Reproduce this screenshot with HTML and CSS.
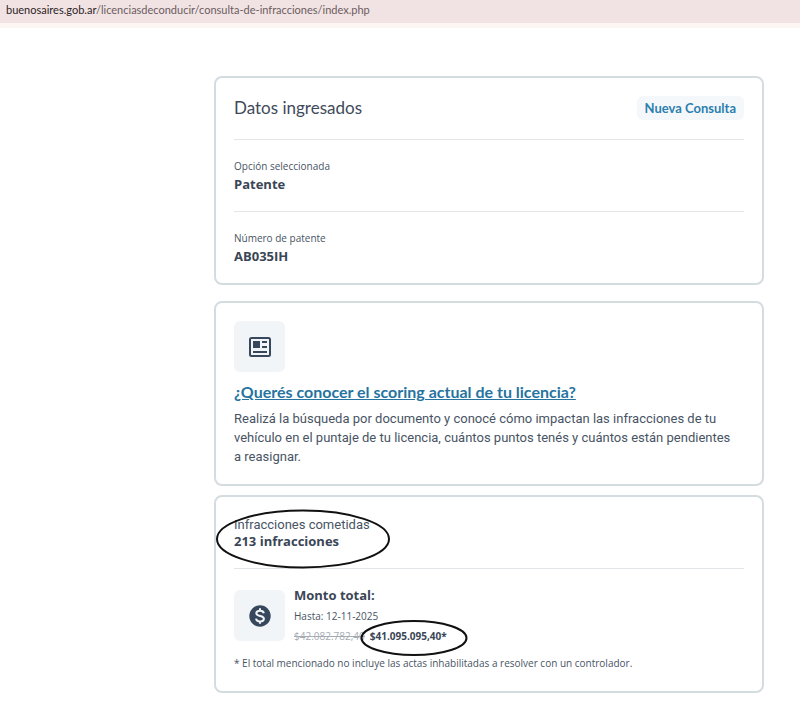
FILE: index.html
```html
<!DOCTYPE html>
<html lang="es">
<head>
<meta charset="utf-8">
<meta name="viewport" content="width=device-width, initial-scale=1">
<title>Consulta de infracciones</title>
<link rel="stylesheet" href="styles.css">
</head>
<body>
<header class="address-bar"><span class="host">buenosaires.gob.ar</span>/licenciasdeconducir/consulta-de-infracciones/index.php</header>
<main class="content">
  <section class="card">
    <div class="card-head">
      <h1 class="title">Datos ingresados</h1>
      <button class="new-query" type="button">Nueva Consulta</button>
    </div>
    <dl class="data">
      <div class="row"><dt>Opción seleccionada</dt><dd>Patente</dd></div>
      <div class="row"><dt>Número de patente</dt><dd>AB035IH</dd></div>
    </dl>
  </section>

  <section class="card scoring">
    <div class="tile">
      <svg class="icon" viewBox="0 0 22 20" aria-hidden="true">
        <rect x="1" y="1" width="20" height="18" rx="1.5" fill="none" stroke="currentColor" stroke-width="2"/>
        <path fill="currentColor" d="M4 4h7v7H4zM13 4h5v2h-5zM13 9h5v2h-5zM4 14h14v2H4z"/>
      </svg>
    </div>
    <h2 class="link-title"><a href="#scoring">¿Querés conocer el scoring actual de tu licencia?</a></h2>
    <p class="text">Realizá la búsqueda por documento y conocé cómo impactan las infracciones de tu vehículo en el puntaje de tu licencia, cuántos puntos tenés y cuántos están pendientes a&nbsp;reasignar.</p>
  </section>

  <section class="card summary">
    <div class="count">
      <div class="marked">
        <p class="count-label">Infracciones cometidas</p>
        <p><strong>213 infracciones</strong></p>
        <svg class="ring ring-count" viewBox="0 0 176 60" aria-hidden="true"><ellipse cx="88" cy="30" rx="86" ry="28.5"/></svg>
      </div>
    </div>
    <div class="total">
      <div class="tile">
        <svg class="icon" viewBox="0 0 22 22" aria-hidden="true">
          <circle cx="11" cy="11" r="10.7" fill="currentColor"/>
          <path class="dollar" d="M11 3.2v2.6M11 16.2v2.6M14.8 8.2C14.5 6.6 13 5.7 11 5.7c-2.2 0-3.7 1-3.7 2.6 0 1.7 1.6 2.2 3.8 2.7 2.3.5 3.8 1.1 3.8 2.8 0 1.6-1.6 2.6-3.8 2.6-2.3 0-3.8-1-4.1-2.8"/>
        </svg>
      </div>
      <div class="amounts">
        <h2 class="total-title">Monto total:</h2>
        <p class="until">Hasta: 12-11-2025</p>
        <p class="prices"><del>$42.082.782,40</del> <strong class="marked">$41.095.095,40*<svg class="ring ring-price" viewBox="0 0 108 36" aria-hidden="true"><ellipse cx="54" cy="18" rx="52.5" ry="17"/></svg></strong></p>
      </div>
    </div>
    <p class="note">* El total mencionado no incluye las actas inhabilitadas a resolver con un controlador.</p>
  </section>
</main>
</body>
</html>
```
FILE: styles.css
```css
* { box-sizing: border-box; }

body {
  margin: 0;
  background: #fff;
  color: #485464;
  font-family: "Open Sans", sans-serif;
  font-size: 13px;
  line-height: 19px;
}

h1, h2, p, dl, dd { margin: 0; }

.address-bar {
  padding: 0 6px 4px;
  border-bottom: 5px solid #fdf5f2;
  background: #f1e3e3;
  color: #6b5c5f;
  font-family: Lato, sans-serif;
  font-size: 11px;
}
.host { color: #2c2426; }

.content { padding: 48px 36px 24px 214px; }

.card {
  margin-bottom: 16px;
  padding: 18px;
  border: 2px solid #d5dce0;
  border-radius: 8px;
}

.card-head {
  display: flex;
  align-items: center;
  justify-content: space-between;
  padding-bottom: 19px;
}
.title {
  color: #3f4a5a;
  font-family: Lato, sans-serif;
  font-size: 17px;
  font-weight: 400;
  line-height: 24px;
}
.new-query {
  padding: 0 8px;
  border: 0;
  border-radius: 6px;
  background: #f5f8fb;
  color: #2b7fae;
  font: 700 13px/24px Lato, sans-serif;
}

.row {
  padding: 17px 0 18px;
  border-top: 1px solid #e3e6e9;
}
.row:last-child { padding-bottom: 0; }
dt { font-size: 10px; line-height: 18px; }
dd, strong, .total-title { color: #3a4656; font-weight: 700; }
dd { line-height: 18px; }

.tile {
  display: grid;
  flex: none;
  place-items: center;
  width: 51px;
  height: 51px;
  border-radius: 6px;
  background: #f2f5f8;
  color: #38485c;
}
.icon { width: 22px; }
.dollar { fill: none; stroke: #f2f5f8; stroke-width: 2; }

.scoring { margin-bottom: 9px; }
.link-title {
  margin: 9px 0 7px;
  font-family: Lato, sans-serif;
  font-size: 16px;
  font-weight: 700;
  line-height: 21px;
}
.link-title a { color: #26739f; }
.text, .count-label { font-family: Roboto, sans-serif; }

.count {
  padding: 2px 0 19px;
  border-bottom: 1px solid #e3e6e9;
  line-height: 16px;
}
.marked { position: relative; }
.ring {
  position: absolute;
  overflow: visible;
  fill: none;
  stroke: #111;
  stroke-width: 2;
  pointer-events: none;
}
.ring-count { top: -8px; left: -19px; width: 176px; }
.ring-price { top: -7px; left: -10px; width: 108px; }

.total { display: flex; align-items: center; gap: 9px; padding-top: 16px; }
.total-title { font-size: 13px; line-height: 21px; }
.until { font-size: 10px; line-height: 21px; }
.prices { display: flex; gap: 5px; font-size: 10px; }
.prices del { color: #a5abb3; }
.note { margin-top: 8px; font-size: 10px; }
```
